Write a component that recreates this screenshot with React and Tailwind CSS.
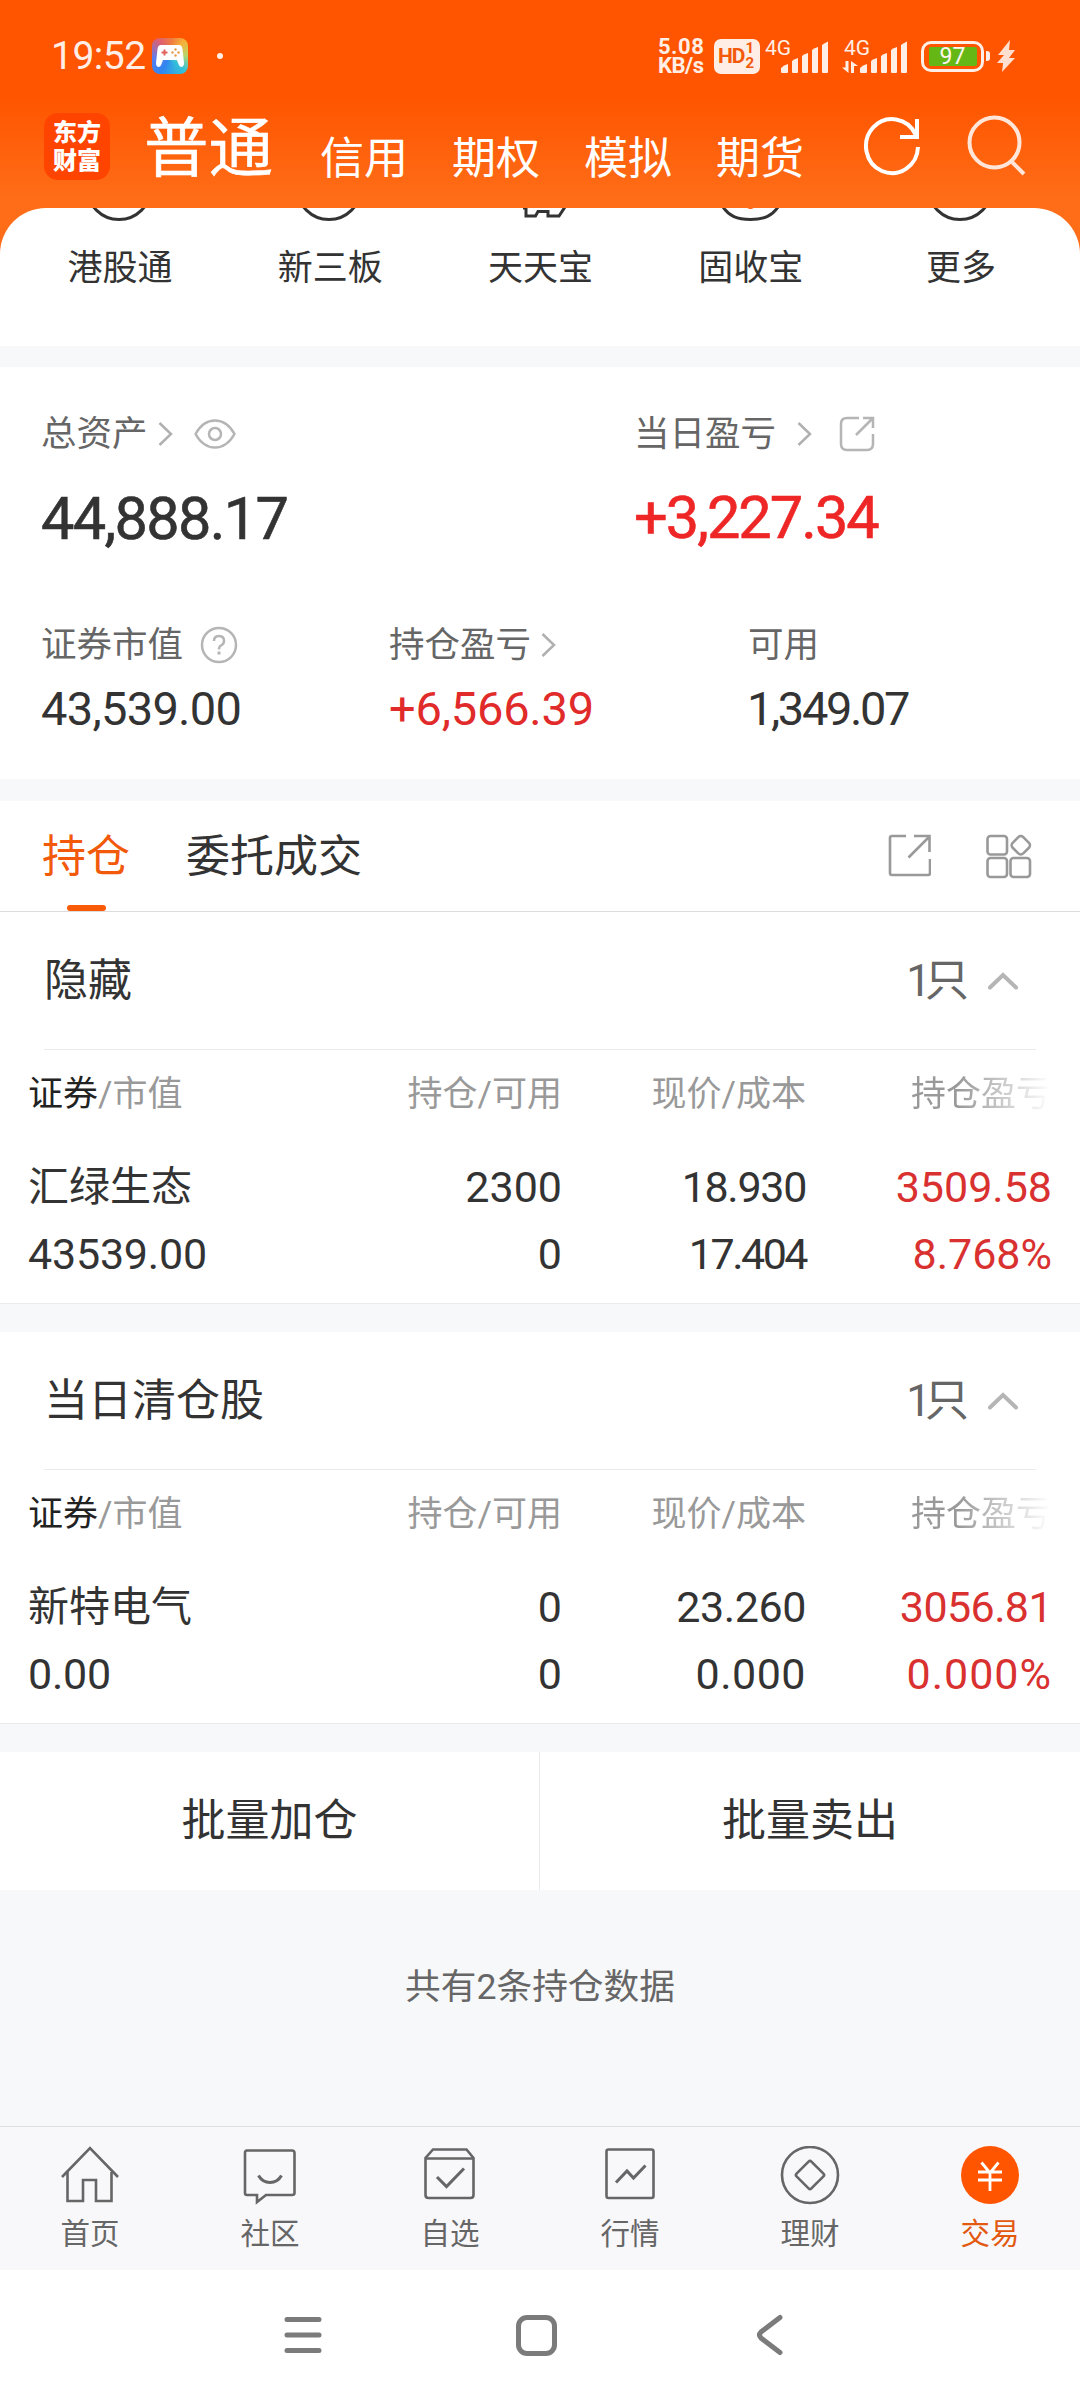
import React from "react";

const FONT = "font-['Roboto','Noto_Sans_CJK_SC',sans-serif]";

function SignalBars() {
  return (
    <svg width="49" height="32" viewBox="0 0 49 32" fill="#ffeee5">
      <path d="M0 31v-4q3-3 7-4v8q0 1-1 1H1q-1 0-1-1z" />
      <path d="M11 31V20q2.500-2 6-3v14q0 1-1 1h-4q-1 0-1-1z" />
      <path d="M21 31V15q2.500-2 6-3v19q0 1-1 1h-4q-1 0-1-1z" />
      <path d="M31 31V9q2.500-2 6-3v25q0 1-1 1h-4q-1 0-1-1z" />
      <path d="M41 31V4q2.500-2 6-3.500v30.500q0 1-1 1h-4q-1 0-1-1z" />
    </svg>
  );
}

function GameIcon() {
  return (
    <div className="ml-[9px] flex h-[36px] w-[36px] items-center justify-center rounded-[8px] bg-[conic-gradient(from_45deg,#f5b23a,#b5d66a_12%,#35c3d8_25%,#2f86f0_45%,#5b7df0_60%,#e0606e_78%,#f0803f_90%,#f5b23a)]">
      <svg width="28" height="24" viewBox="0 0 28 24">
        <path d="M5 1h18q3 0 3.500 4L28 19q0 4-3 4-1.500 0-2.500-3l-1.500-4H7l-1.500 4q-1 3-2.500 3-3 0-3-4L1.500 5Q2 1 5 1z" fill="#fff" />
        <path d="M8.500 5.500v6M5.500 8.500h6" stroke="#e0635c" strokeWidth="2" />
        <g fill="#e59a45"><circle cx="19.500" cy="5.500" r="1.200" /><circle cx="19.500" cy="11.500" r="1.200" /><circle cx="16.500" cy="8.500" r="1.200" /><circle cx="22.500" cy="8.500" r="1.200" /></g>
      </svg>
    </div>
  );
}

function StatusBar() {
  return (
    <div className="flex h-[112px] items-center text-[#ffeee5]">
      <span className="ml-[51px] w-[92px] text-[39px] leading-[40px] tracking-[-0.500px]">19:52</span>
      <GameIcon />
      <div className="ml-[29px] h-[6px] w-[6px] rounded-full bg-[#ffeee5]" />
      <div className="ml-[435px] w-[56px] text-[22px] leading-[19px] font-bold">
        <div className="tracking-[0.500px]">5.08</div>
        <div className="tracking-[-0.500px]">KB/s</div>
      </div>
      <div className="flex h-[35px] w-[46px] items-center rounded-[7px] bg-[#ffeee5] pl-[4px] text-[#f2590a]">
        <span className="text-[21px] font-bold leading-[24px] tracking-[-1px]">HD</span>
        <span className="ml-px flex flex-col text-[15px] font-bold leading-[15px]">
          <span>1</span>
          <span>2</span>
        </span>
      </div>
      <div className="relative ml-[21px] flex h-[34px] w-[49px] items-end">
        <SignalBars />
        <span className="absolute left-[-16px] top-0 text-[21px] leading-[18px]">4G</span>
      </div>
      <div className="relative ml-[12px] flex h-[34px] items-end">
        <svg className="mr-[2px]" width="16" height="12" viewBox="0 0 16 12" fill="#ffeee5">
          <path d="M3.500 0h3v12L0 6.500h3.500zM9 12h3V5h4L9 0z" />
        </svg>
        <SignalBars />
        <span className="absolute left-[2px] top-0 text-[21px] leading-[18px]">4G</span>
      </div>
      <div className="ml-[12px] flex h-[31px] w-[63px] items-center justify-center rounded-[10px] border-[3px] border-[#ffeee5]">
        <div className="flex h-[19px] w-[48px] items-center justify-center rounded-[2px] bg-[#65b715] text-[23px] leading-[19px] text-[#fff6f0]">
          97
        </div>
      </div>
      <div className="ml-[2px] h-[10px] w-[4px] rounded-r-[3px] bg-[#ffeee5]" />
      <svg className="ml-[7px]" width="19" height="32" viewBox="0 0 19 32" fill="#ffe0d0">
        <path d="M13 0 1 15h6L0 23h6L5 32 18 18h-6l6-8h-6z" />
      </svg>
    </div>
  );
}

function AppHeader() {
  return (
    <div className="flex h-[96px] items-start text-white">
      <div className="ml-[44px] mt-px flex h-[67px] w-[66px] flex-col items-center justify-center rounded-[14px] bg-[#ff4400] text-[24px] leading-[28px] font-black">
        <span>东方</span>
        <span>财富</span>
      </div>
      <span className="ml-[34px] mt-[4px] w-[130px] text-[64.500px] leading-[66px] [-webkit-text-stroke:0.5px_currentColor]">普通</span>
      <div className="ml-[46px] mt-[25px] flex gap-[44px] text-[44px] leading-[44px]">
        <span>信用</span>
        <span>期权</span>
        <span>模拟</span>
        <span>期货</span>
      </div>
      <svg className="ml-[58px] mt-[4px]" width="60" height="60" viewBox="0 0 60 60" fill="none" stroke="#fff" strokeWidth="4">
        <path d="M56 31A26 27 0 1 1 53.500 18.500" />
        <path d="M55 3v18H38" />
      </svg>
      <svg className="ml-[44px] mt-[2px]" width="62" height="62" viewBox="0 0 62 62" fill="none" stroke="#ffe6d8" strokeWidth="4">
        <circle cx="28.500" cy="28.500" r="25" />
        <path d="M45 47 58 60" />
      </svg>
    </div>
  );
}

const shortcuts = [
  { label: "港股通", icon: "arc" },
  { label: "新三板", icon: "arc" },
  { label: "天天宝", icon: "cat" },
  { label: "固收宝", icon: "bowl" },
  { label: "更多", icon: "arc" },
];

function ShortcutIcon({ type }) {
  return (
    <svg width="80" height="14" viewBox="0 0 80 14" fill="none" stroke="#333" strokeWidth="3">
      {type === "arc" && <circle cx="39" cy="-20.500" r="32" />}
      {type === "cat" && <path d="M23 0h3v8h9.500l2.500-4.500h10V8h11l6-9" />}
      {type === "bowl" && (
        <>
          <path d="M12 -1C18 8 26 11.500 39.500 11.500S61 8 67 -1" />
          <circle cx="39.500" cy="-3" r="4" fill="#ff5a10" stroke="none" />
        </>
      )}
    </svg>
  );
}

function Shortcuts() {
  return (
    <div className="grid h-[138px] grid-cols-5 rounded-t-[46px] bg-white pl-[15px] pr-[14px]">
      {shortcuts.map((s) => (
        <div key={s.label} className="flex flex-col items-center overflow-hidden">
          <ShortcutIcon type={s.icon} />
          <span className="mt-[27px] text-[35px] leading-[40px]">{s.label}</span>
        </div>
      ))}
    </div>
  );
}

function ChevronRight({ className }) {
  return (
    <svg className={className} width="15" height="24" viewBox="0 0 15 24" fill="none" stroke="#b0b0b0" strokeWidth="2.500">
      <path d="M1.500 1 13 12 1.500 23" />
    </svg>
  );
}

function Assets() {
  return (
    <section className="h-[412px] bg-white pl-[41px] pt-[45px]">
      <div className="grid grid-cols-[593px_1fr]">
        <div>
          <div className="flex h-[44px] items-center text-[35.500px] leading-[44px] text-[#666]">
            <span>总资产</span>
            <ChevronRight className="ml-[10px]" />
            <svg className="ml-[21px]" width="42" height="32" viewBox="0 0 42 32" fill="none" stroke="#b5b5b5" strokeWidth="2.500">
              <path d="M1.500 16Q9 2.500 21 2.500T40.500 16Q33 29.500 21 29.500T1.500 16z" strokeLinejoin="round" />
              <circle cx="21" cy="16" r="6" />
            </svg>
          </div>
          <div className="mt-[33px] text-[59.500px] leading-[60px] tracking-[-1.700px] [-webkit-text-stroke:0.6px_currentColor]">44,888.17</div>
        </div>
        <div>
          <div className="flex h-[44px] items-center text-[35.500px] leading-[44px] text-[#666]">
            <span>当日盈亏</span>
            <ChevronRight className="ml-[21px]" />
            <svg className="ml-[27px]" width="36" height="36" viewBox="0 0 36 36" fill="none" stroke="#b5b5b5" strokeWidth="2.500">
              <path d="M20 2H8Q2 2 2 8v20q0 6 6 6h20q6 0 6-6V18" />
              <path d="M17 19 33 3M24 2h10v10" />
            </svg>
          </div>
          <div className="mt-[32px] text-[59.500px] leading-[60px] tracking-[-2px] text-[#ee2626] [-webkit-text-stroke:0.6px_currentColor]">+3,227.34</div>
        </div>
      </div>
      <div className="mt-[74px] grid grid-cols-[348px_359px_1fr]">
        <div>
          <div className="flex h-[44px] items-center text-[35.500px] leading-[44px] text-[#666]">
            <span>证券市值</span>
            <svg className="ml-[17px]" width="38" height="38" viewBox="0 0 38 38" fill="none" stroke="#b5b5b5" strokeWidth="2.500">
              <circle cx="19" cy="19" r="17" />
              <path d="M14 15q0-5 5-5t5 5q0 3-3 4.500-2 1-2 4" />
              <path d="M19 25.500v3" strokeWidth="3" />
            </svg>
          </div>
          <div className="mt-[17px] text-[47px] leading-[50px] tracking-[-0.700px]">43,539.00</div>
        </div>
        <div>
          <div className="flex h-[44px] items-center text-[35.500px] leading-[44px] text-[#666]">
            <span>持仓盈亏</span>
            <ChevronRight className="ml-[10px]" />
          </div>
          <div className="mt-[17px] text-[47px] leading-[50px] tracking-[-0.200px] text-[#e12a2a]">+6,566.39</div>
        </div>
        <div>
          <div className="h-[44px] text-[35.500px] leading-[44px] text-[#666]">可用</div>
          <div className="mt-[17px] ml-[-1px] text-[47px] leading-[50px] tracking-[-2.400px]">1,349.07</div>
        </div>
      </div>
    </section>
  );
}

function Tabs() {
  return (
    <div className="flex h-[111px] items-start border-b border-[#dcdcdc] bg-white">
      <div className="ml-[42px] flex h-[110px] w-[88px] flex-col items-center">
        <span className="mt-[32px] h-[48px] text-[44px] leading-[48px] text-[#f2590a]">持仓</span>
        <span className="mt-[24px] h-[6px] w-[39px] rounded-full bg-[#f95a08]" />
      </div>
      <span className="ml-[56px] mt-[32px] text-[44px] leading-[48px]">委托成交</span>
      <svg className="ml-[526px] mt-[33px]" width="43" height="43" viewBox="0 0 43 43" fill="none" stroke="#999" strokeWidth="2.600">
        <path d="M18 2H4Q2 2 2 4v35q0 2 2 2h36q2 0 2-2V25" />
        <path d="M20.500 23.500 41 3M26 2h15.500v16" />
      </svg>
      <svg className="ml-[55px] mt-[33px]" width="46" height="46" viewBox="0 0 46 46" fill="none" stroke="#999" strokeWidth="2.600">
        <rect x="1.500" y="2" width="19.500" height="18.500" rx="3" />
        <rect x="1.500" y="24" width="19.500" height="19" rx="3" />
        <rect x="24.500" y="24" width="19.500" height="19" rx="3" />
        <rect x="27.300" y="3.800" width="15" height="15" rx="3.500" transform="rotate(45 34.800 11.300)" />
      </svg>
    </div>
  );
}

function HoldingGroup({ title, name, marketValue, held, available, price, cost, profit, rate }) {
  return (
    <section className="flex h-[392px] flex-col border-b border-[#e9eaec] bg-white">
      <div className="mx-[44px] flex h-[138px] items-center border-b border-[#ececec] text-[44px] leading-[48px]">
        <span className="mt-px flex-1">{title}</span>
        <span className="mt-px text-[#666]">
          <span className="tracking-[-6px]">1</span>只
        </span>
        <svg className="ml-[18px] mr-[17px] mt-px" width="32" height="18" viewBox="0 0 32 18" fill="none" stroke="#b5b5b5" strokeWidth="4" strokeLinecap="round">
          <path d="M3 15.500 16 3 29 15.500" />
        </svg>
      </div>
      <div className="grid h-[90px] grid-cols-[274px_260px_244px_245px] items-center pl-[28px] text-right text-[35px] leading-[40px] text-[#999]">
        <span className="text-left">
          <span className="text-[#222]">证券</span>/市值
        </span>
        <span>持仓/可用</span>
        <span>现价/成本</span>
        <span className="bg-[linear-gradient(90deg,#999_62%,#fff_100%)] bg-clip-text text-transparent">持仓盈亏</span>
      </div>
      <div className="mt-[14px] grid grid-cols-[274px_260px_244px_246px] items-center pl-[28px] text-right text-[43px] leading-[67px]">
        <span className="text-left text-[41px] leading-[67px]">{name}</span>
        <span>{held}</span>
        <span className={price.startsWith("1") ? "tracking-[-1.300px]" : "tracking-[-0.400px]"}>{price}</span>
        <span className={profit.endsWith("1") ? "pl-1 tracking-[-0.600px] text-[#d93030]" : "text-[#d93030]"}>{profit}</span>
        <span className="text-left tracking-[-0.200px]">{marketValue}</span>
        <span>{available}</span>
        <span className={cost.startsWith("1") ? "tracking-[-2.500px]" : "tracking-[0.500px]"}>{cost}</span>
        <span className={rate.startsWith("0") ? "tracking-[1px] text-[#d93030]" : "text-[#d93030]"}>{rate}</span>
      </div>
    </section>
  );
}

const navItems = [
  {
    label: "首页",
    icon: (
      <>
        <path d="M2 31 30 2 58 31" />
        <path d="M7.500 26v29H23V34h13v21h15.500V26" />
      </>
    ),
  },
  {
    label: "社区",
    icon: (
      <>
        <path d="M7 4.500h45q2.500 0 2.500 2.500v40q0 2-2.500 2H26l-9 7v-7H7q-2 0-2-2V7q0-2.500 2-2.500z" />
        <path d="M18.500 29.500q4 7 11.500 7t11.500-7" strokeWidth="3" />
      </>
    ),
  },
  {
    label: "自选",
    icon: (
      <>
        <path d="M5.500 12v37q0 3 3 3h42q3 0 3-3V12L46.500 3.500H13z" />
        <path d="M5.500 12.500h48" />
        <path d="m17 31 9.500 9.500L44 22.500" strokeWidth="3" />
      </>
    ),
  },
  {
    label: "行情",
    icon: (
      <>
        <rect x="6.500" y="3.500" width="47" height="48.500" rx="2" />
        <path d="M16 36.500 27 25l6.500 7L45.500 19.500" strokeWidth="3" />
      </>
    ),
  },
  {
    label: "理财",
    icon: (
      <>
        <circle cx="30" cy="29" r="28" />
        <rect x="19.500" y="18.500" width="21" height="21" rx="2" transform="rotate(45 30 29)" />
      </>
    ),
  },
  {
    label: "交易",
    active: true,
    icon: (
      <>
        <circle cx="30" cy="29" r="29" fill="#ff5500" stroke="none" />
        <path d="M21.500 16.500 30 27l8.500-10.500M18 26h24M18 34h24M30 26v19" stroke="#fff" strokeWidth="2.800" />
      </>
    ),
  },
];

function BottomNav() {
  return (
    <nav className="grid h-[144px] grid-cols-6 border-t border-[#e0e1e4] bg-[#f8f8fb]">
      {navItems.map((n) => (
        <div key={n.label} className="flex flex-col items-center">
          <svg className="mt-[19px]" width="60" height="60" viewBox="0 0 60 60" fill="none" stroke="#666" strokeWidth="2.600">
            {n.icon}
          </svg>
          <span className={n.active ? "mt-[10px] text-[29.500px] leading-[36px] text-[#e2590f]" : "mt-[10px] text-[29.500px] leading-[36px] text-[#666]"}>
            {n.label}
          </span>
        </div>
      ))}
    </nav>
  );
}

function SystemNav() {
  return (
    <div className="flex h-[130px] items-center bg-white">
      <svg className="ml-[284px]" width="38" height="40" viewBox="0 0 38 40" stroke="#7b7b7b" strokeWidth="5" strokeLinecap="round">
        <path d="M3 4.500h32M3 20h32M3 35.500h32" />
      </svg>
      <div className="ml-[194px] h-[41px] w-[41px] rounded-[11px] border-[5px] border-[#7b7b7b]" />
      <svg className="ml-[199px]" width="28" height="42" viewBox="0 0 28 42" fill="none" stroke="#7b7b7b" strokeWidth="5" strokeLinecap="round">
        <path d="M24 3.500 5 18q-3 3 0 6L24 38.500" />
      </svg>
    </div>
  );
}

export default function App() {
  return (
    <div className={`${FONT} flex h-[2400px] w-[1080px] flex-col overflow-hidden bg-[#f7f8fa] text-[#333] antialiased`}>
      <header className="bg-[linear-gradient(180deg,#ff5500_0px,#ff5500_98px,#ff6d18_200px,#ff6d18_100%)]">
        <StatusBar />
        <AppHeader />
        <Shortcuts />
      </header>
      <div className="h-[21px]" />
      <Assets />
      <div className="h-[22px]" />
      <Tabs />
      <HoldingGroup
        title="隐藏"
        name="汇绿生态"
        marketValue="43539.00"
        held="2300"
        available="0"
        price="18.930"
        cost="17.404"
        profit="3509.58"
        rate="8.768%"
      />
      <div className="h-[28px]" />
      <HoldingGroup
        title="当日清仓股"
        name="新特电气"
        marketValue="0.00"
        held="0"
        available="0"
        price="23.260"
        cost="0.000"
        profit="3056.81"
        rate="0.000%"
      />
      <div className="h-[28px]" />
      <div className="grid h-[138px] grid-cols-2 bg-white text-center text-[44px] leading-[138px]">
        <span className="border-r border-[#e9eaec]">批量加仓</span>
        <span>批量卖出</span>
      </div>
      <div className="flex-1 pt-[77px] text-center text-[35.700px] leading-[40px] text-[#666]">共有2条持仓数据</div>
      <BottomNav />
      <SystemNav />
    </div>
  );
}
